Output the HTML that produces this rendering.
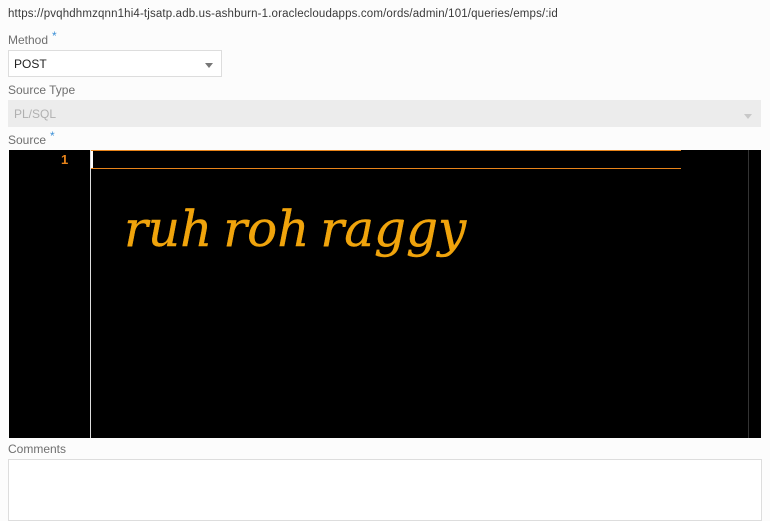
<!DOCTYPE html>
<html><head><style>
body{margin:0;width:770px;height:515px;background:#fcfcfc;font-family:"Liberation Sans",sans-serif;position:relative;overflow:hidden}
.a{position:absolute}
.lbl{font-size:12px;color:#6f6f6f}
.req{color:#3b8fd6;font-size:12px;position:relative;top:-4px;margin-left:4px}
</style></head><body>
<div class="a" style="left:8px;top:8px;font-size:11.5px;color:#3a3a3a;letter-spacing:0.15px">https://pvqhdhmzqnn1hi4-tjsatp.adb.us-ashburn-1.oraclecloudapps.com/ords/admin/101/queries/emps/:id</div>
<div class="a lbl" style="left:8px;top:33px">Method<span class="req">*</span></div>
<div class="a" style="left:8px;top:50px;width:212px;height:25px;border:1px solid #ddd;background:#fff"></div>
<div class="a" style="left:14px;top:57px;font-size:12px;color:#222">POST</div>
<div class="a" style="left:205px;top:63px;border-left:4px solid transparent;border-right:4px solid transparent;border-top:5px solid #777"></div>
<div class="a lbl" style="left:8px;top:83px">Source Type</div>
<div class="a" style="left:8px;top:100px;width:753px;height:27px;background:#ececec"></div>
<div class="a" style="left:14px;top:107px;font-size:12px;color:#b0b0b0">PL/SQL</div>
<div class="a" style="left:744px;top:114px;border-left:4px solid transparent;border-right:4px solid transparent;border-top:5px solid #c8c8c8"></div>
<div class="a lbl" style="left:8px;top:133px">Source<span class="req">*</span></div>
<div class="a" style="left:9px;top:150px;width:752px;height:288px;background:#000"></div>
<div class="a" style="left:90px;top:150px;width:1px;height:288px;background:#ddd"></div>
<div class="a" style="left:748px;top:150px;width:1px;height:288px;background:#333"></div>
<div class="a" style="left:61px;top:152px;font-size:13px;font-weight:bold;color:#e8841a">1</div>
<div class="a" style="left:91px;top:150px;width:590px;height:17px;border-top:1px solid #e8841a;border-bottom:1px solid #e8841a"></div>
<div class="a" style="left:91px;top:151px;width:2px;height:17px;background:#fff"></div>
<div class="a" style="left:124px;top:199px;font-family:'DejaVu Serif',serif;font-style:italic;font-size:50px;word-spacing:-5px;color:#f0a40c;line-height:1.2;-webkit-text-stroke:0.4px #f0a40c">ruh roh raggy</div>
<div class="a lbl" style="left:8px;top:442px">Comments</div>
<div class="a" style="left:8px;top:459px;width:752px;height:60px;border:1px solid #ddd;background:#fff"></div>
</body></html>
